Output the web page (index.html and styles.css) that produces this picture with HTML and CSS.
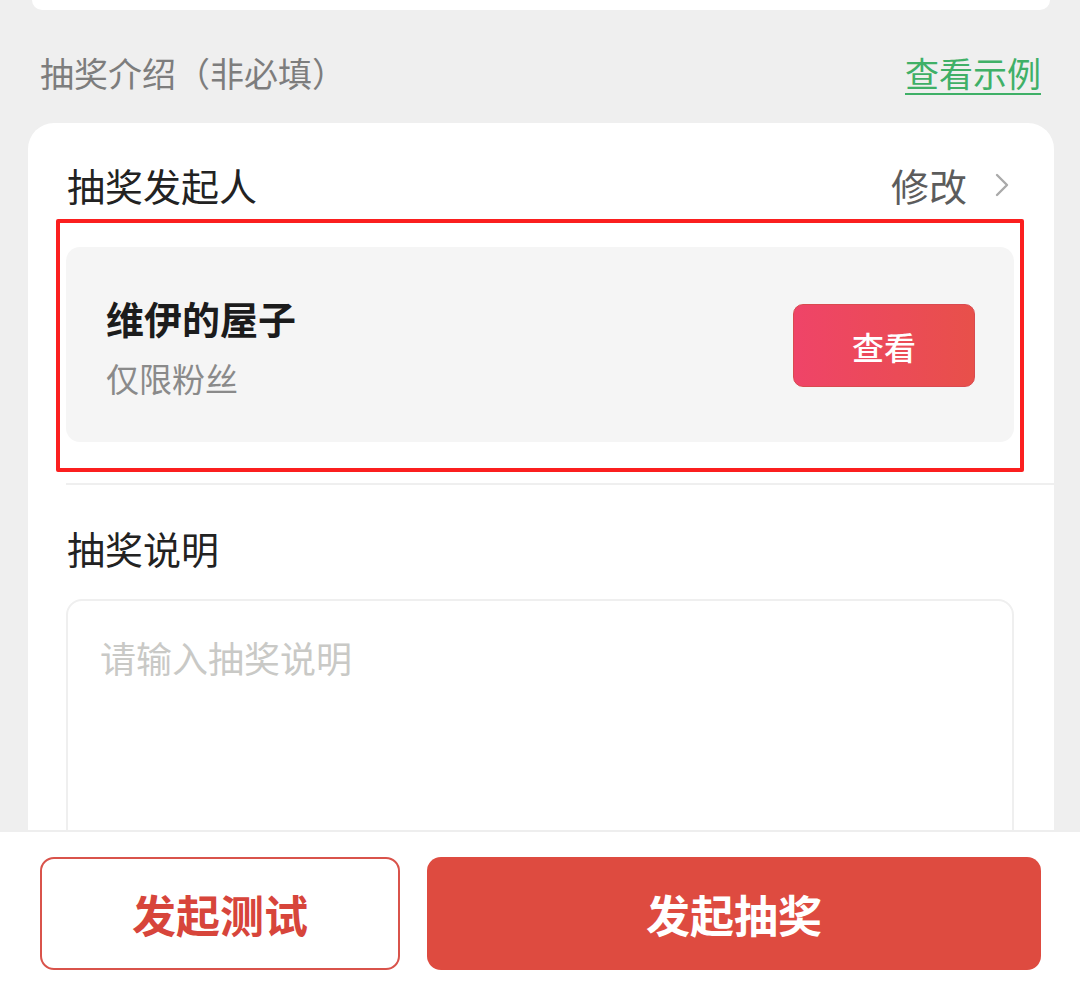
FILE: index.html
```html
<!DOCTYPE html>
<html lang="zh-CN">
<head>
<meta charset="utf-8">
<title>抽奖介绍</title>
<link rel="stylesheet" href="styles.css">
</head>
<body>
<div class="page">
  <div class="top-card"></div>
  <div class="section-head">
    <span class="section-title">抽奖介绍（非必填）</span>
    <a class="example-link" href="#">查看示例</a>
  </div>
  <div class="card">
    <div class="card-head">
      <span class="card-title">抽奖发起人</span>
      <span class="edit">修改
        <svg class="chevron" width="16" height="26" viewBox="0 0 16 26"><path d="M3 3 L13 13 L3 23" fill="none" stroke="#aaaaaa" stroke-width="2.4" stroke-linecap="round" stroke-linejoin="round"/></svg>
      </span>
    </div>
    <div class="host-box">
      <div class="host-info">
        <div class="host-name">维伊的屋子</div>
        <div class="host-sub">仅限粉丝</div>
      </div>
      <button class="view-btn">查看</button>
    </div>
    <div class="divider"></div>
    <div class="desc-title">抽奖说明</div>
    <div class="desc-input">
      <span class="placeholder">请输入抽奖说明</span>
    </div>
    <div class="highlight"></div>
  </div>
</div>
<div class="bottom-bar">
  <button class="btn btn-outline">发起测试</button>
  <button class="btn btn-primary">发起抽奖</button>
</div>
</body>
</html>
```

FILE: styles.css
```css
* { box-sizing: border-box; }
html, body {
  margin: 0;
  padding: 0;
  height: 100%;
  overflow: hidden;
}
body {
  background: #efefef;
  font-family: "Noto Sans CJK SC", "Noto Sans", sans-serif;
}
.page {
  padding: 0 26px 0 28px;
}
.top-card {
  height: 10px;
  margin: 0 4px;
  background: #ffffff;
  border-radius: 0 0 22px 22px;
}
.section-head {
  height: 113px;
  display: flex;
  align-items: center;
  justify-content: space-between;
  padding: 12px 13px 0 12px;
}
.section-title {
  font-size: 34px;
  color: #7d7d7d;
  line-height: 1;
}
.example-link {
  font-size: 34px;
  color: #3fb067;
  line-height: 1;
  text-decoration: underline;
  text-underline-offset: 6px;
  text-decoration-thickness: 2px;
}
.card {
  position: relative;
  background: #ffffff;
  border-radius: 26px 26px 0 0;
  height: 900px;
  padding-left: 38px;
}
.card-head {
  height: 124px;
  display: flex;
  align-items: center;
  justify-content: space-between;
  padding: 0 44px 0 1px;
}
.card-title {
  font-size: 38px;
  color: #222222;
  line-height: 1;
}
.edit {
  display: flex;
  align-items: center;
  font-size: 38px;
  color: #5c5c5c;
  line-height: 1;
}
.chevron {
  margin-left: 27px;
}
.host-box {
  width: 948px;
  height: 195px;
  background: #f5f5f5;
  border-radius: 14px;
  display: flex;
  align-items: center;
  justify-content: space-between;
  padding: 0 39px 0 40px;
}
.host-info {
  padding-top: 4px;
}
.host-name {
  font-size: 38px;
  font-weight: 700;
  color: #1c1c1c;
  line-height: 1;
}
.host-sub {
  margin-top: 25px;
  font-size: 33px;
  color: #8a8a8a;
  line-height: 1;
}
.view-btn {
  width: 182px;
  height: 83px;
  border: 1px solid #d94a4f;
  border-radius: 10px;
  background: linear-gradient(90deg, #ef4468 0%, #e8504a 100%);
  color: #ffffff;
  font-family: inherit;
  font-size: 32px;
  font-weight: 500;
  margin-top: 2px;
}
.divider {
  margin-top: 41px;
  height: 2px;
  background: #efefef;
}
.desc-title {
  height: 114px;
  display: flex;
  align-items: center;
  font-size: 38px;
  color: #222222;
  line-height: 1;
  padding: 12px 0 0 1px;
}
.desc-input {
  width: 948px;
  height: 300px;
  border: 2px solid #efefef;
  border-radius: 16px;
  padding: 38px 0 0 32px;
}
.placeholder {
  font-size: 36px;
  color: #c9c9c6;
  line-height: 1;
}
.highlight {
  position: absolute;
  left: 28px;
  top: 96px;
  width: 968px;
  height: 253px;
  border: 4px solid #fb1f1f;
  border-radius: 2px;
  pointer-events: none;
}
.bottom-bar {
  position: fixed;
  left: 0;
  right: 0;
  bottom: 0;
  height: 167px;
  background: #ffffff;
  border-top: 2px solid #eeeeee;
  display: flex;
  gap: 27px;
  padding: 25px 39px 27px 40px;
}
.btn {
  height: 113px;
  border-radius: 14px;
  font-family: inherit;
  font-size: 44px;
  font-weight: 700;
}
.btn-outline {
  width: 360px;
  background: #ffffff;
  border: 2px solid #d9534b;
  color: #d7453b;
}
.btn-primary {
  flex: 1;
  background: #de4b40;
  border: none;
  color: #ffffff;
}
```
